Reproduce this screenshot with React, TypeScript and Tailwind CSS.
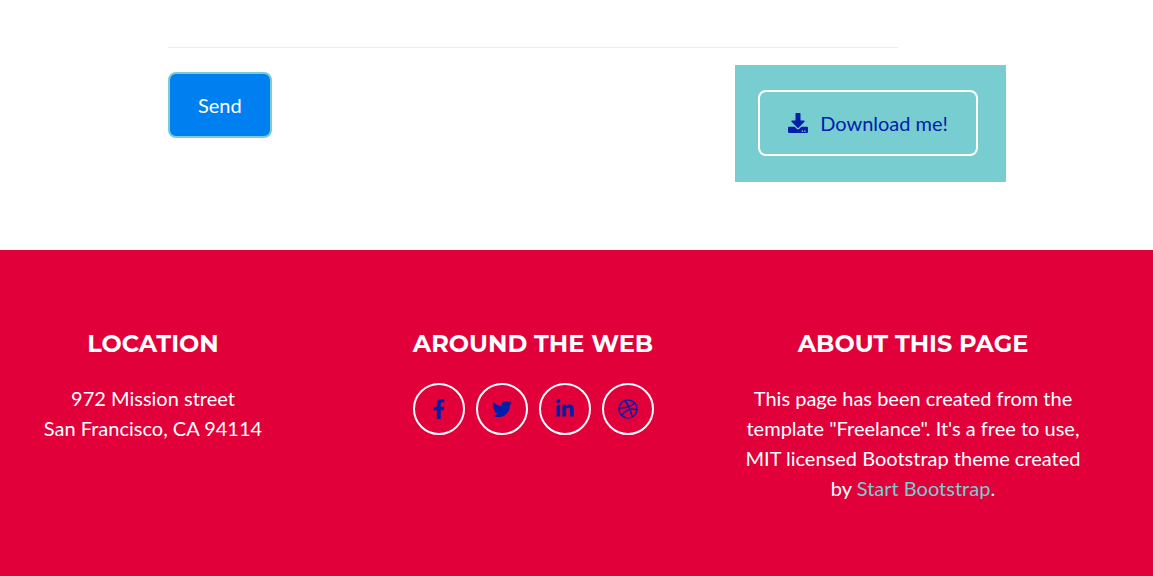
import { FaDownload, FaFacebookF, FaTwitter, FaLinkedinIn, FaDribbble } from "react-icons/fa";

const networks = [
  { label: "Facebook", Icon: FaFacebookF },
  { label: "Twitter", Icon: FaTwitter },
  { label: "LinkedIn", Icon: FaLinkedinIn },
  { label: "Dribbble", Icon: FaDribbble },
];

function Title({ children }: { children: string }) {
  return (
    <h4 className="mb-[25px] font-['Montserrat','Liberation_Sans',sans-serif] text-2xl leading-7 font-bold uppercase">
      {children}
    </h4>
  );
}

export default function App() {
  return (
    <div className="bg-white font-['Lato',sans-serif] text-xl leading-[30px]">
      <main className="pt-[47px] pr-[147px] pb-[68px] pl-[168px]">
        <hr className="mr-[108px] border-t border-[#e9ecef]" />
        <div className="mt-[17px] flex items-start justify-between">
          <form className="pt-[7px]" onSubmit={(e) => e.preventDefault()}>
            <button
              type="submit"
              className="rounded-lg border-2 border-[#78cdd1] bg-[#0080f0] px-7 py-4 text-white"
            >
              Send
            </button>
          </form>
          <div className="bg-[#78cdd1] pt-[25px] pr-7 pb-[26px] pl-[23px]">
            <a
              href="#download"
              className="flex items-center gap-3 rounded-lg border-2 border-white px-7 py-4 text-[#001eaa]"
            >
              <FaDownload size={20} aria-hidden="true" />
              Download me!
            </a>
          </div>
        </div>
      </main>
      <footer className="bg-[#e1003a] pt-20 pb-20 text-center text-white">
        <div className="mr-[50px] -ml-[37px] grid grid-cols-3">
          <section className="px-4">
            <Title>Location</Title>
            <p>
              972 Mission street
              <br />
              San Francisco, CA 94114
            </p>
          </section>
          <section className="px-4">
            <Title>Around the Web</Title>
            <ul className="flex justify-center gap-[11px]">
              {networks.map(({ label, Icon }) => (
                <li key={label}>
                  <a
                    href="#social"
                    aria-label={label}
                    className="flex size-[52px] items-center justify-center rounded-full border-2 border-white text-[#001eaa]"
                  >
                    <Icon size={20} />
                  </a>
                </li>
              ))}
            </ul>
          </section>
          <section className="px-4">
            <Title>About this page</Title>
            <p>
              This page has been created from the template "Freelance". It's a free to use, MIT licensed Bootstrap
              theme created by{" "}
              <a href="#start-bootstrap" className="text-[#78cdd1]">
                Start Bootstrap
              </a>
              .
            </p>
          </section>
        </div>
      </footer>
    </div>
  );
}
